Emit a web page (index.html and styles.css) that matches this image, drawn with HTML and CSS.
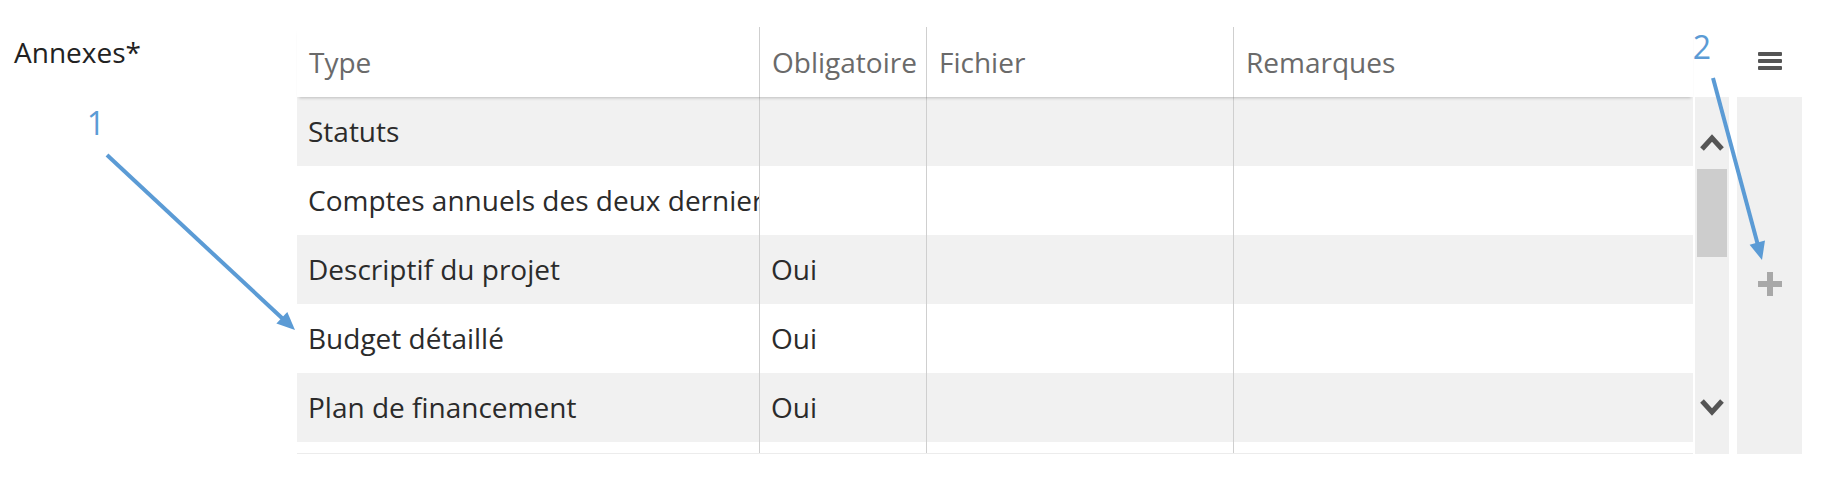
FILE: index.html
```html
<!DOCTYPE html>
<html lang="fr">
<head>
    <meta charset="UTF-8">
    <title>Annexes</title>
    <link rel="stylesheet" href="styles.css">
</head>
<body>

    <div class="field">
        <label class="field-label">Annexes*</label>

        <div class="widget">
            <div class="widget-head">
                <div class="thead cols">
                    <div class="cell">Type</div>
                    <div class="cell">Obligatoire</div>
                    <div class="cell">Fichier</div>
                    <div class="cell">Remarques</div>
                </div>
                <div class="menu">
                    <span class="burger"><i></i><i></i><i></i></span>
                </div>
            </div>

            <div class="widget-body">
                <div class="tbody">
                    <div class="row cols odd">
                        <div class="cell">Statuts</div>
                        <div class="cell"></div>
                        <div class="cell"></div>
                        <div class="cell"></div>
                    </div>
                    <div class="row cols">
                        <div class="cell">Comptes annuels des deux derniers exercices</div>
                        <div class="cell"></div>
                        <div class="cell"></div>
                        <div class="cell"></div>
                    </div>
                    <div class="row cols odd">
                        <div class="cell">Descriptif du projet</div>
                        <div class="cell">Oui</div>
                        <div class="cell"></div>
                        <div class="cell"></div>
                    </div>
                    <div class="row cols">
                        <div class="cell">Budget détaillé</div>
                        <div class="cell">Oui</div>
                        <div class="cell"></div>
                        <div class="cell"></div>
                    </div>
                    <div class="row cols odd">
                        <div class="cell">Plan de financement</div>
                        <div class="cell">Oui</div>
                        <div class="cell"></div>
                        <div class="cell"></div>
                    </div>
                    <div class="row cols filler">
                        <div class="cell"></div>
                        <div class="cell"></div>
                        <div class="cell"></div>
                        <div class="cell"></div>
                    </div>
                </div>

                <div class="scrollbar">
                    <svg class="chevron" width="24" height="21" viewBox="0 0 24 21">
                        <polyline points="2,17 12,6 22,17" />
                    </svg>
                    <div class="thumb"></div>
                    <div class="spacer"></div>
                    <svg class="chevron" width="24" height="21" viewBox="0 0 24 21">
                        <polyline points="2,4 12,15 22,4" />
                    </svg>
                </div>

                <div class="add-col">
                    <span class="plus"></span>
                </div>
            </div>
        </div>
    </div>

    <!-- annotations drawn over the screenshot -->
    <svg class="annotations" width="1834" height="498" viewBox="0 0 1834 498">
        <text x="96" y="135">1</text>
        <line x1="107" y1="155" x2="283" y2="319" />
        <polygon points="295,330 276.4,323.6 287.3,311.9" />

        <text x="1702" y="59">2</text>
        <line x1="1713" y1="78" x2="1757.5" y2="243.5" />
        <polygon points="1762,260 1749.6,244.7 1765,240.5" />
    </svg>

</body>
</html>
```

FILE: styles.css
```css
body {
    margin: 0;
    padding: 0;
    font-family: 'Open Sans', sans-serif;
    font-size: 28px;
    color: #2b2b2b;
    background-color: #fff;
}

.field {
    display: flex;
    align-items: flex-start;
    padding: 27px 0 0 14px;
}

.field-label {
    width: 283px;
    margin-top: 6px;
    line-height: 38px;
    color: #222;
}

.widget-head,
.widget-body {
    display: flex;
}

.cols {
    display: grid;
    grid-template-columns: 462px 167px 307px 460px;
    width: 1396px;
}

.cell {
    padding: 0 11px;
    overflow: hidden;
    white-space: nowrap;
}

.cell + .cell {
    border-left: 1px solid #cfcfcf;
}

.thead {
    height: 70px;
    line-height: 70px;
    color: #6a6a6a;
    position: relative;
    z-index: 1;
    box-shadow: 0 3px 3px -2px rgba(0, 0, 0, 0.22);
}

.thead .cell {
    padding-left: 12px;
}

.menu {
    width: 65px;
    margin-left: 44px;
    display: flex;
    justify-content: center;
    padding-top: 25px;
    box-sizing: border-box;
}

.burger {
    display: flex;
    flex-direction: column;
    gap: 3px;
    width: 24px;
}

.burger i {
    display: block;
    height: 4px;
    background-color: #555;
    border-radius: 1px;
}

.tbody {
    display: flex;
    flex-direction: column;
    width: 1396px;
    height: 357px;
    border-bottom: 1px solid #ececec;
    box-sizing: border-box;
}

.row {
    height: 69px;
    line-height: 69px;
}

.row.odd {
    background-color: #f1f1f1;
}

.row.filler {
    flex: 1;
    height: auto;
}

.scrollbar {
    width: 34px;
    height: 357px;
    margin-left: 2px;
    background-color: #f0f0f0;
    display: flex;
    flex-direction: column;
    align-items: center;
    padding: 35px 0 36px;
    box-sizing: border-box;
}

.chevron polyline {
    fill: none;
    stroke: #555;
    stroke-width: 5;
}

.thumb {
    width: 30px;
    height: 88px;
    margin-top: 16px;
    background-color: #cdcdcd;
}

.spacer {
    flex: 1;
}

.add-col {
    width: 65px;
    height: 357px;
    margin-left: 8px;
    background-color: #f0f0f0;
    display: flex;
    justify-content: center;
    padding-top: 175px;
    box-sizing: border-box;
}

.plus {
    display: block;
    width: 24px;
    height: 24px;
    background:
        linear-gradient(#a8a8a8, #a8a8a8) center / 24px 6px no-repeat,
        linear-gradient(#a8a8a8, #a8a8a8) center / 6px 24px no-repeat;
}

.annotations {
    position: absolute;
    top: 0;
    left: 0;
    pointer-events: none;
}

.annotations text {
    font-family: 'Open Sans', sans-serif;
    font-size: 32px;
    fill: #5b9bd5;
    text-anchor: middle;
}

.annotations line {
    stroke: #5b9bd5;
    stroke-width: 4;
}

.annotations polygon {
    fill: #5b9bd5;
}
```
